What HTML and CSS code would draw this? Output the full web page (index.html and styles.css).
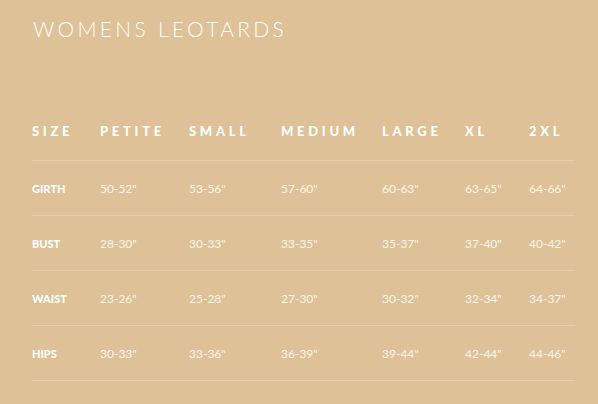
FILE: index.html
```html
<!DOCTYPE html>
<html>
<head>
<meta charset="utf-8">
<link rel="stylesheet" href="styles.css">
</head>
<body>
<div class="page">
  <h1 class="title">WOMENS LEOTARDS</h1>
  <div class="chart">
    <div class="row head">
      <div>SIZE</div><div>PETITE</div><div>SMALL</div><div>MEDIUM</div><div>LARGE</div><div>XL</div><div>2XL</div>
    </div>
    <div class="row">
      <div class="label">GIRTH</div><div>50-52"</div><div>53-56"</div><div>57-60"</div><div>60-63"</div><div>63-65"</div><div>64-66"</div>
    </div>
    <div class="row">
      <div class="label">BUST</div><div>28-30"</div><div>30-33"</div><div>33-35"</div><div>35-37"</div><div>37-40"</div><div>40-42"</div>
    </div>
    <div class="row">
      <div class="label">WAIST</div><div>23-26"</div><div>25-28"</div><div>27-30"</div><div>30-32"</div><div>32-34"</div><div>34-37"</div>
    </div>
    <div class="row">
      <div class="label">HIPS</div><div>30-33"</div><div>33-36"</div><div>36-39"</div><div>39-44"</div><div>42-44"</div><div>44-46"</div>
    </div>
  </div>
</div>
</body>
</html>
```
FILE: styles.css
```css
html, body {
  margin: 0;
  padding: 0;
  background: #dec196;
}
.page {
  width: 598px;
  height: 404px;
  box-sizing: border-box;
  padding: 18px 23px 0 32px;
  font-family: Lato, "Open Sans", sans-serif;
  color: #ffffff;
}
.title {
  margin: 0 0 0 1px;
  font-size: 21px;
  line-height: 21px;
  font-weight: 300;
  letter-spacing: 3.3px;
}
.chart {
  margin-top: 68px;
}
.row {
  display: grid;
  grid-template-columns: 68px 89px 92px 101px 83px 64px 46px;
  align-items: center;
  height: 54px;
  border-bottom: 1px solid #e6cfab;
  font-size: 12px;
  font-weight: 400;
  color: #fbf5ec;
}
.row > div {
  white-space: nowrap;
}
.row.head {
  font-size: 13px;
  font-weight: 900;
  letter-spacing: 3.7px;
  color: #ffffff;
  padding-bottom: 6px;
  box-sizing: border-box;
  height: 54px;
}
.label {
  font-weight: 900;
  font-size: 11px;
  color: #ffffff;
}
```
